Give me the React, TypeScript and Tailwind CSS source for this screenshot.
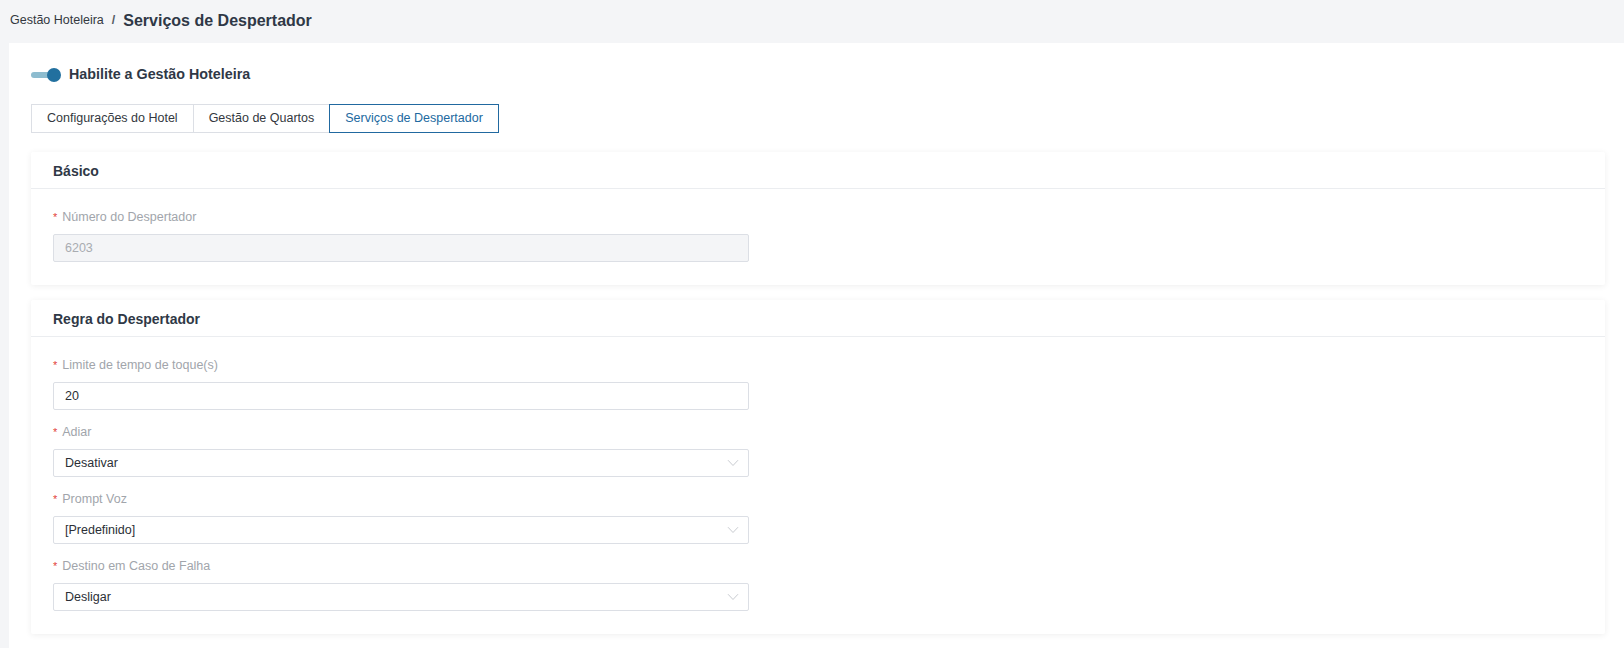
import React from "react";

const font = { fontFamily: '"Liberation Sans", Arial, Helvetica, sans-serif' };

function Chevron() {
  return (
    <svg width="12" height="8" viewBox="0 0 12 8" fill="none" className="shrink-0">
      <path d="M1 1.2 L6 6.5 L11 1.2" stroke="#c9ccd1" strokeWidth="1" />
    </svg>
  );
}

function Label({ text }: { text: string }) {
  return (
    <div className="flex items-center h-[16px] mb-[9px] text-[12.5px] leading-[16px] text-[#a1a5ab]">
      <span className="text-[#e2413b] mr-[5px] text-[11px]">*</span>
      <span>{text}</span>
    </div>
  );
}

function TextField({ label, value, disabled }: { label: string; value: string; disabled?: boolean }) {
  return (
    <div className="mb-[14px] last:mb-0">
      <Label text={label} />
      <div
        className={
          disabled
            ? "w-[696px] h-[28px] border border-[#dcdfe5] rounded-[2px] bg-[#f4f5f7] pl-[11px] flex items-center text-[12.5px] text-[#a9acb1]"
            : "w-[696px] h-[28px] border border-[#dcdfe5] rounded-[2px] bg-white pl-[11px] flex items-center text-[12.5px] text-[#2b2f36]"
        }
      >
        {value}
      </div>
    </div>
  );
}

function SelectField({ label, value }: { label: string; value: string }) {
  return (
    <div className="mb-[14px] last:mb-0">
      <Label text={label} />
      <div className="w-[696px] h-[28px] border border-[#dcdfe5] rounded-[2px] bg-white pl-[11px] pr-[9px] flex items-center justify-between text-[12.5px] text-[#2b2f36]">
        <span>{value}</span>
        <Chevron />
      </div>
    </div>
  );
}

function Card({ title, children }: { title: string; children: React.ReactNode }) {
  return (
    <section className="bg-white rounded-[2px] shadow-[0_1px_6px_rgba(0,0,0,0.07)]">
      <div className="h-[37px] flex items-center px-[22px] pt-[2px] border-b border-[#ebedf0]">
        <h2 className="text-[14px] font-bold text-[#2f3846]">{title}</h2>
      </div>
      <div className="px-[22px] pt-[20px] pb-[23px]">{children}</div>
    </section>
  );
}

export default function App() {
  const tabs = [
    { name: "Configurações do Hotel", active: false },
    { name: "Gestão de Quartos", active: false },
    { name: "Serviços de Despertador", active: true },
  ];

  return (
    <div className="w-[1624px] h-[648px] bg-[#f4f5f7] flex flex-col overflow-hidden" style={font}>
      <header className="h-[43px] shrink-0 flex items-center pl-[10px] pb-[2px]">
        <span className="text-[12.5px] text-[#333840]">Gestão Hoteleira</span>
        <span className="text-[12.5px] text-[#555b63] mx-[8px] font-bold">/</span>
        <span className="text-[16px] font-bold text-[#2f3846]">Serviços de Despertador</span>
      </header>

      <main className="flex-1 bg-white ml-[9px] pl-[22px] pr-[19px] pt-[24px]">
        <div className="flex items-center h-[16px]">
          <div className="relative w-[30px] h-[14px]">
            <div className="absolute left-0 top-[4px] w-[28px] h-[6px] rounded-full bg-[#8dbccf]" />
            <div className="absolute right-0 top-0 w-[14px] h-[14px] rounded-full bg-[#22709f]" />
          </div>
          <span className="ml-[8px] text-[14.3px] font-bold text-[#2f3846]">Habilite a Gestão Hoteleira</span>
        </div>

        <nav className="flex mt-[21px] h-[29px]">
          {tabs.map((t, i) => (
            <div
              key={t.name}
              className={
                t.active
                  ? "h-[29px] px-[15px] flex items-center border border-[#2169a0] text-[#2169a0] text-[12.5px] bg-white"
                  : i === 0
                  ? "h-[29px] px-[15px] flex items-center border border-[#dcdfe5] text-[#333840] text-[12.5px] bg-white"
                  : "h-[29px] px-[15px] flex items-center border border-l-0 border-r-0 border-[#dcdfe5] text-[#333840] text-[12.5px] bg-white"
              }
            >
              {t.name}
            </div>
          ))}
        </nav>

        <div className="mt-[19px] flex flex-col gap-[15px]">
          <Card title="Básico">
            <TextField label="Número do Despertador" value="6203" disabled />
          </Card>
          <Card title="Regra do Despertador">
            <TextField label="Limite de tempo de toque(s)" value="20" />
            <SelectField label="Adiar" value="Desativar" />
            <SelectField label="Prompt Voz" value="[Predefinido]" />
            <SelectField label="Destino em Caso de Falha" value="Desligar" />
          </Card>
        </div>
      </main>
    </div>
  );
}
